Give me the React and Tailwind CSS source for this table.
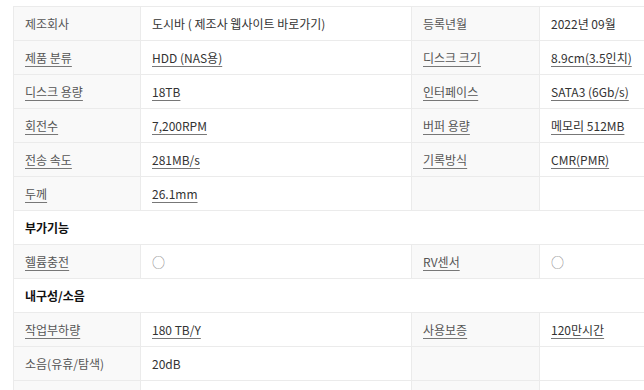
import React from "react";

const rows = [
  { type: "row", cells: [["제조회사", false], ["도시바 ( 제조사 웹사이트 바로가기)", false], ["등록년월", false], ["2022년 09월", false]] },
  { type: "row", cells: [["제품 분류", true], ["HDD (NAS용)", true], ["디스크 크기", true], ["8.9cm(3.5인치)", true]] },
  { type: "row", cells: [["디스크 용량", true], ["18TB", true], ["인터페이스", true], ["SATA3 (6Gb/s)", true]] },
  { type: "row", cells: [["회전수", true], ["7,200RPM", true], ["버퍼 용량", true], ["메모리 512MB", true]] },
  { type: "row", cells: [["전송 속도", true], ["281MB/s", true], ["기록방식", true], ["CMR(PMR)", true]] },
  { type: "row", cells: [["두께", true], ["26.1mm", true], ["", false], ["", false]] },
  { type: "head", title: "부가기능" },
  { type: "row", cells: [["헬륨충전", true], ["○", false], ["RV센서", true], ["○", false]] },
  { type: "head", title: "내구성/소음" },
  { type: "row", cells: [["작업부하량", true], ["180 TB/Y", true], ["사용보증", true], ["120만시간", true]] },
  { type: "row", cells: [["소음(유휴/탐색)", false], ["20dB", false], ["", false], ["", false]] },
  { type: "row", cells: [["", false], ["", false], ["", false], ["", false]] },
];

const Cell = ({ text, link, label, circle }) => (
  <td
    className={`h-[34px] border border-[#ebebeb] px-[11px] align-middle text-[12px] leading-none ${
      label ? "bg-[#f9f9f9] text-[#555]" : "bg-white text-[#333]"
    }`}
  >
    {link ? (
      <span className="underline underline-offset-[3px] decoration-[#777]">{text}</span>
    ) : circle ? (
      <span className="text-[13px] text-[#888]">{text}</span>
    ) : (
      text
    )}
  </td>
);

export default function App() {
  return (
    <div
      className="h-[390px] w-[644px] overflow-hidden bg-white pl-[13px] pt-[6px]"
      style={{ fontFamily: '"Noto Sans CJK KR", "Noto Sans", sans-serif' }}
    >
      <table className="w-[660px] table-fixed border-collapse">
        <colgroup>
          <col className="w-[127px]" />
          <col className="w-[271px]" />
          <col className="w-[128px]" />
          <col className="w-[134px]" />
        </colgroup>
        <tbody>
          {rows.map((r, i) =>
            r.type === "head" ? (
              <tr key={i}>
                <td
                  colSpan={4}
                  className="h-[34px] border border-[#ebebeb] bg-white px-[11px] align-middle text-[12px] font-bold leading-none text-[#111]"
                >
                  {r.title}
                </td>
              </tr>
            ) : (
              <tr key={i}>
                {r.cells.map(([t, link], j) => (
                  <Cell
                    key={j}
                    text={t}
                    link={link}
                    label={j % 2 === 0}
                    circle={t === "○"}
                  />
                ))}
              </tr>
            )
          )}
        </tbody>
      </table>
    </div>
  );
}
